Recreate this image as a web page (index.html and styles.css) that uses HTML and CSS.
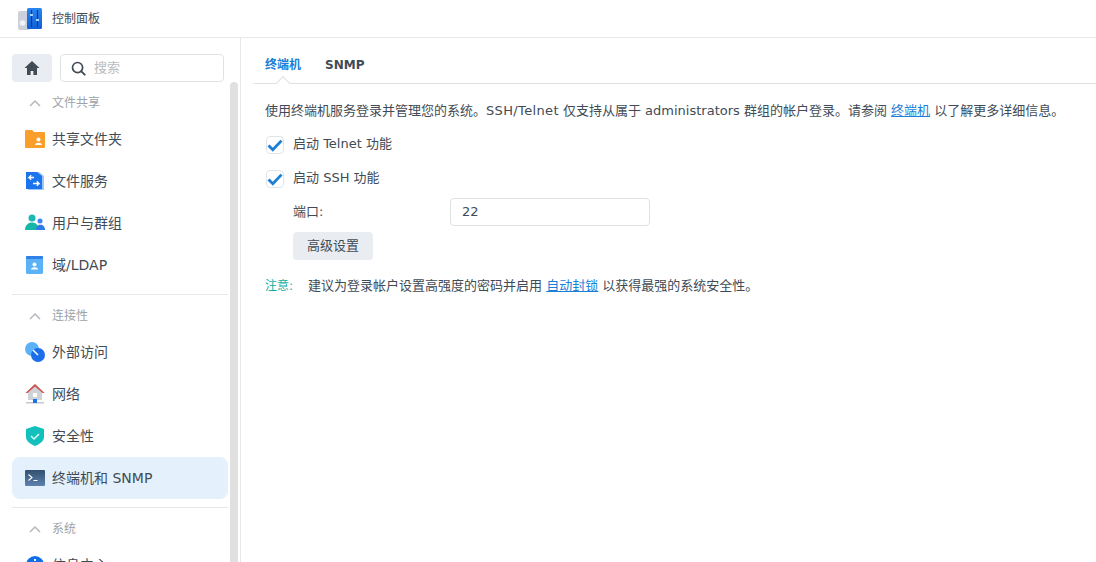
FILE: index.html
```html
<!DOCTYPE html>
<html lang="zh-CN">
<head>
<meta charset="utf-8">
<title>控制面板</title>
<link rel="stylesheet" href="styles.css">
</head>
<body>
<div class="window">
  <header class="titlebar">
    <svg class="app-icon" viewBox="0 0 24 24"><defs><linearGradient id="appblue" x1="0" y1="0" x2="0" y2="1"><stop offset="0" stop-color="#2a86f0"/><stop offset="1" stop-color="#0f5fd6"/></linearGradient><linearGradient id="term" x1="0" y1="0" x2="0" y2="1"><stop offset="0" stop-color="#33506f"/><stop offset="1" stop-color="#5d83ad"/></linearGradient></defs><rect x="0" y="4" width="12" height="19" rx="2" fill="#ccd0dc"/><circle cx="4.500" cy="16" r="2.800" fill="#f0f2f7"/><rect x="9" y="1" width="15" height="21" rx="1.500" fill="url(#appblue)"/><path d="M13.500 3v17M19.500 3v17" stroke="#0a3a94" stroke-width="1.200"/><rect x="12" y="7" width="3" height="2" fill="#a6d4ff"/><rect x="18" y="12" width="3" height="2" fill="#a6d4ff"/></svg>
    <span class="app-title">控制面板</span>
  </header>
  <div class="main">
    <aside class="sidebar">
      <div class="sidebar-top">
        <button class="home-btn"><svg viewBox="0 0 16 16" class="home-icon"><path d="M8 1 0.500 8H3v7h3.600v-4h2.800v4H13V8h2.500z" fill="#414b55"/></svg></button>
        <div class="search"><svg viewBox="0 0 16 16" class="search-icon"><circle cx="7" cy="7" r="5.400" fill="none" stroke="#414b55" stroke-width="1.800"/><path d="M11 11l3.600 3.600" stroke="#414b55" stroke-width="2" stroke-linecap="round"/></svg><span class="search-text">搜索</span></div>
      </div>
      <div class="scrollbar"></div>
      <nav class="nav">
        <div class="group-head"><svg viewBox="0 0 12 8" class="chev"><path d="M1 7l5-5 5 5" fill="none" stroke="#b4b8bd" stroke-width="1.500"/></svg><span>文件共享</span></div>
        <a class="item"><svg class="icon" viewBox="0 0 20 20"><path d="M0 2a1 1 0 0 1 1-1h6l2 2h10a1 1 0 0 1 1 1v14a1 1 0 0 1-1 1H1a1 1 0 0 1-1-1z" fill="#fb9f2c"/><circle cx="13.500" cy="10.500" r="2" fill="#fff"/><path d="M10 16c0-3 7-3 7 0z" fill="#fff"/></svg><span>共享文件夹</span></a>
        <a class="item"><svg class="icon" viewBox="0 0 20 20"><path d="M3 1h11l5 4v14H3z" fill="#9cc6f7"/><path d="M1 1h11l5 4v13H1z" fill="#1c74ec"/><path d="M9 6.500H4l2.200-2.200M4 6.500l2.200 2.200M8 12.500h6l-2.200-2.200M14 12.500l-2.200 2.200" fill="none" stroke="#fff" stroke-width="1.300"/></svg><span>文件服务</span></a>
        <a class="item"><svg class="icon" viewBox="0 0 20 20"><circle cx="7" cy="5" r="3.500" fill="#19b8b0"/><path d="M0 17c0-10 14-10 14 0z" fill="#16b7a7"/><circle cx="15" cy="8" r="2.500" fill="#3b86ee"/><path d="M11 17c0-7 9-7 9 0z" fill="#2f7ae6"/></svg><span>用户与群组</span></a>
        <a class="item"><svg class="icon" viewBox="0 0 20 20"><rect x="1" y="1" width="17" height="18" rx="1.500" fill="#5cb2f7"/><rect x="1" y="1" width="17" height="3" rx="1" fill="#2f80e8"/><circle cx="9.500" cy="9.500" r="2" fill="#fff"/><path d="M6 14.500c0-3 7-3 7 0z" fill="#fff"/></svg><span>域/LDAP</span></a>
        <div class="divider"></div>
        <div class="group-head"><svg viewBox="0 0 12 8" class="chev"><path d="M1 7l5-5 5 5" fill="none" stroke="#b4b8bd" stroke-width="1.500"/></svg><span>连接性</span></div>
        <a class="item"><svg class="icon" viewBox="0 0 20 20"><circle cx="7" cy="7" r="7" fill="#5cb2f7"/><circle cx="13" cy="13" r="7" fill="#1c6fe8"/><path d="M8 8l5 5" stroke="#fff" stroke-width="1.500"/></svg><span>外部访问</span></a>
        <a class="item"><svg class="icon" viewBox="0 0 20 20"><path d="M10 0 0.500 9H3v7h14V9h2.500z" fill="#cfd2d6"/><path d="M10 0 0.500 9h2L10 2.500 17.500 9h2z" fill="#d0514d"/><rect x="8" y="9" width="4" height="4" fill="#fff"/><rect x="1" y="18" width="18" height="1.500" fill="#c4c8cc"/><rect x="8" y="15" width="4" height="4" fill="#1c74ec"/></svg><span>网络</span></a>
        <a class="item"><svg class="icon" viewBox="0 0 20 20"><path d="M10 0 19 3v8c0 4-4 7-9 9-5-2-9-5-9-9V3z" fill="#14c0bb"/><path d="M6 10l3 3 5-5" fill="none" stroke="#dff" stroke-width="1.500"/></svg><span>安全性</span></a>
        <a class="item active"><svg class="icon" viewBox="0 0 20 20"><rect y="2" width="20" height="16" rx="1" fill="url(#term)"/><path d="M3.500 6.500l3.500 3-3.500 3M8.500 12.500h4" fill="none" stroke="#fff" stroke-width="1.100"/></svg><span>终端机和 SNMP</span></a>
        <div class="divider"></div>
        <div class="group-head"><svg viewBox="0 0 12 8" class="chev"><path d="M1 7l5-5 5 5" fill="none" stroke="#b4b8bd" stroke-width="1.500"/></svg><span>系统</span></div>
        <a class="item"><svg class="icon" viewBox="0 0 20 20"><circle cx="10" cy="10" r="9" fill="#0f6fe8"/><rect x="9" y="4" width="2" height="2" fill="#fff"/><rect x="9" y="8" width="2" height="7" fill="#fff"/></svg><span>信息中心</span></a>
      </nav>
    </aside>
    <section class="content">
      <div class="tabs">
        <span class="tab tab-active">终端机</span>
        <span class="tab">SNMP</span>
      </div>
      <div class="panel">
        <p class="line">使用终端机服务登录并管理您的系统。<span class="wide">SSH/Telnet</span> 仅支持从属于 administrators 群组的帐户登录。请参阅 <a class="link">终端机</a> 以了解更多详细信息。</p>
        <label class="check"><span class="box"><svg viewBox="0 0 14 12" class="tick"><path d="M1 6l4 4 8-8.500" fill="none" stroke="#1a7fd6" stroke-width="2.600"/></svg></span><span class="check-text">启动 Telnet 功能</span></label>
        <label class="check"><span class="box"><svg viewBox="0 0 14 12" class="tick"><path d="M1 6l4 4 8-8.500" fill="none" stroke="#1a7fd6" stroke-width="2.600"/></svg></span><span class="check-text">启动 SSH 功能</span></label>
        <div class="field"><span class="field-label">端口:</span><div class="input">22</div></div>
        <div class="sub"><button class="btn">高级设置</button></div>
        <p class="note"><span class="note-label">注意:</span><span>建议为登录帐户设置高强度的密码并启用 <a class="link">自动封锁</a> 以获得最强的系统安全性。</span></p>
      </div>
    </section>
  </div>
</div>
</body>
</html>
```
FILE: styles.css
```css
* { box-sizing: border-box; }
html, body { margin: 0; height: 100%; overflow: hidden; }
body { background: #fff; color: #414b55; font: 13px/20px "DejaVu Sans", "Noto Sans CJK SC", sans-serif; }
.window { height: 562px; display: flex; flex-direction: column; }
.titlebar { height: 38px; flex: none; display: flex; align-items: center; padding-left: 18px; gap: 10px; border-bottom: 1px solid #e6e8ea; }
.app-icon { width: 24px; height: 24px; }
.app-title { font-size: 12px; }
.main { flex: 1; display: flex; min-height: 0; }
.sidebar { width: 241px; flex: none; position: relative; border-right: 1px solid #e6e8ea; overflow: hidden; padding: 16px 12px 0; }
.sidebar-top { display: flex; gap: 8px; height: 28px; }
.home-btn { width: 40px; height: 28px; border: 0; border-radius: 4px; background: #e9edf1; padding: 0; display: flex; align-items: center; justify-content: center; }
.home-icon { width: 16px; height: 16px; }
.search { width: 164px; height: 28px; border: 1px solid #dfe2e5; border-radius: 4px; display: flex; align-items: center; padding-left: 10px; gap: 8px; }
.search-icon { width: 15px; height: 15px; }
.search-text { color: #b8bcc0; }
.scrollbar { position: absolute; left: 230px; top: 44px; width: 8px; height: 480px; background: #e0e0e0; border-radius: 4px 4px 0 0; }
.nav { width: 216px; display: flex; flex-direction: column; padding-top: 8px; }
.group-head { height: 21px; margin-top: 2px; display: flex; align-items: center; padding-left: 17px; gap: 11px; color: #9da3a8; font-size: 12px; }
.chev { width: 12px; height: 8px; }
.item { height: 42px; display: flex; align-items: center; padding-left: 13px; gap: 7px; border-radius: 8px; font-size: 14px; }
.group-head + .item { margin-top: 5px; }
.icon { width: 20px; height: 20px; flex: none; }
.active { background: #e4f0fb; }
.divider { height: 1px; background: #e6e8ea; margin: 8px 0; flex: none; }
.content { flex: 1; min-width: 0; padding: 0 0 0 12px; }
.tabs { height: 46px; display: flex; align-items: center; border-bottom: 1px solid #dfe2e5; padding: 8px 0 0 12px; gap: 24px; font-weight: 700; }
.tab { font-size: 12px; color: #414b55; }
.tab-active { color: #1a7fd6; position: relative; }
.tab-active::after { content: ""; position: absolute; left: 13px; bottom: -13px; width: 9px; height: 9px; background: #fff; border: 1px solid #dfe2e5; border-right: 0; border-bottom: 0; transform: rotate(45deg); }
.panel { padding: 17px 0 0 12px; }
.line { margin: 0; height: 20px; white-space: nowrap; }
.wide { letter-spacing: .35px; }
.link { color: #1a7fd6; text-decoration: underline; }
.check { display: flex; align-items: center; gap: 9px; height: 20px; margin-top: 14px; padding-left: 1px; }
.check-text { margin-bottom: 2px; }
.box { width: 18px; height: 18px; border: 1px solid #e2e5e8; border-radius: 4px; display: flex; align-items: center; justify-content: center; }
.tick { width: 16px; height: 13px; flex: none; }
.field { display: flex; align-items: center; margin: 9px 0 0 28px; height: 28px; }
.field-label { width: 157px; }
.input { width: 200px; height: 28px; border: 1px solid #dfe2e5; border-radius: 4px; padding-left: 11px; line-height: 26px; }
.sub { margin: 6px 0 0 28px; }
.btn { width: 80px; height: 28px; border: 0; border-radius: 4px; background: #e9edf1; color: #414b55; font: inherit; padding: 0; }
.note { margin: 16px 0 0; display: flex; gap: 15px; white-space: nowrap; }
.note-label { color: #12b0a6; font-size: 12px; }
```
